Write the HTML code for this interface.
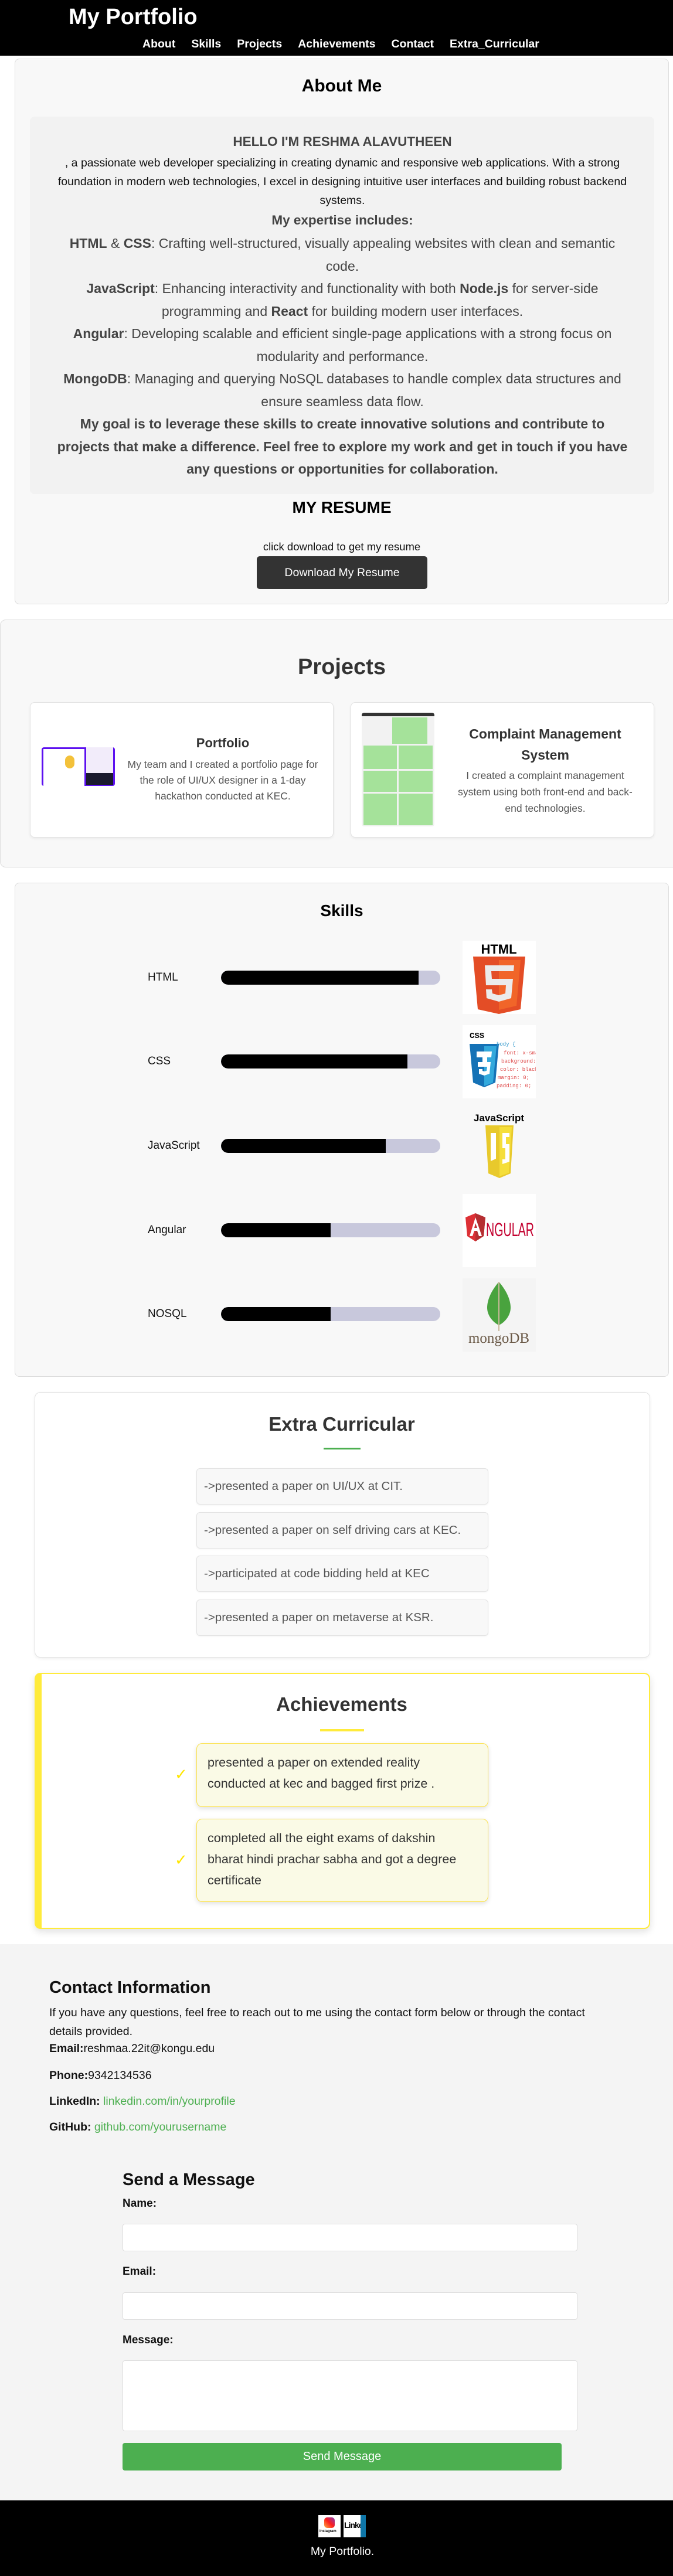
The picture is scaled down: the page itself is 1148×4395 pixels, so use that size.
<!DOCTYPE html>
<html><head><meta charset="utf-8"><style>
*{box-sizing:border-box;margin:0;padding:0}
body{width:1148px;height:4395px;position:relative;background:#fff;font-family:"Liberation Sans",Arial,sans-serif;overflow:hidden}
.a{position:absolute}
.c{text-align:center}
header{position:absolute;left:0;top:0;width:1148px;height:95px;background:#000;color:#fff}
.nav a{color:#fff;text-decoration:none;font-weight:bold;font-size:19.5px;margin-right:27px}
.box{position:absolute;background:#f8f8f8;border:1px solid #ddd;border-radius:8px}
.lbl{font-size:19px;color:#111}
.bar{position:absolute;left:377px;width:374px;height:24px;border-radius:12px;background:#c8c8dc;overflow:hidden}
.bar i{display:block;height:100%;background:#000;border-radius:12px 0 0 12px}
.ex{position:absolute;left:335px;width:498px;height:62px;background:#f8f8f8;border:1px solid #e3e3e3;border-radius:6px;font-size:20.5px;color:#555;padding-left:12px;line-height:60px;box-shadow:0 1px 3px rgba(0,0,0,.05)}
.ach{position:absolute;left:335px;width:498px;background:#fafae6;border:1.5px solid #fbe14a;border-radius:10px;font-size:21.5px;color:#333;padding:14px 60px 14px 18px;line-height:36px;box-shadow:0 3px 8px rgba(0,0,0,.12)}
.chk{position:absolute;left:298px;color:#ffe600;font-size:26px}
.inp{position:absolute;left:209px;width:776px;background:#fff;border:1px solid #ddd;border-radius:4px}
.fl{position:absolute;left:209px;font-weight:bold;font-size:19px;color:#111}
.ct{position:absolute;left:84px;font-size:19.5px;color:#111}
</style></head><body>
<header>
<div class="a" style="left:117px;top:8px;font-size:38px;font-weight:bold">My Portfolio</div>
<div class="a nav" style="left:243px;top:64px;white-space:nowrap"><a>About</a><a>Skills</a><a>Projects</a><a>Achievements</a><a>Contact</a><a>Extra_Curricular</a></div>
</header>

<div class="box" style="left:25px;top:100px;width:1116px;height:931px"></div>
<div class="a c" style="left:0;width:1166px;top:130px;font-size:30px;font-weight:bold">About Me</div>
<div class="a" style="left:51px;top:199px;width:1065px;height:644px;background:#f2f2f2;border-radius:8px"></div>
<div class="a c" style="left:60px;width:1048px;top:229px;font-size:22.5px;font-weight:bold;color:#444">HELLO I'M RESHMA ALAVUTHEEN</div>
<div class="a c" style="left:80px;width:1008px;top:262px;font-size:19.5px;line-height:32px;color:#111">, a passionate web developer specializing in creating dynamic and responsive web applications. With a strong foundation in modern web technologies, I excel in designing intuitive user interfaces and building robust backend systems.</div>
<div class="a c" style="left:60px;width:1048px;top:363px;font-size:22.5px;font-weight:bold;color:#444">My expertise includes:</div>
<div class="a c" style="left:96px;width:976px;top:396px;font-size:23px;line-height:38.5px;color:#444">
<b>HTML</b> &amp; <b>CSS</b>: Crafting well-structured, visually appealing websites with clean and semantic code.<br>
<b>JavaScript</b>: Enhancing interactivity and functionality with both <b>Node.js</b> for server-side programming and <b>React</b> for building modern user interfaces.<br>
<b>Angular</b>: Developing scalable and efficient single-page applications with a strong focus on modularity and performance.<br>
<b>MongoDB</b>: Managing and querying NoSQL databases to handle complex data structures and ensure seamless data flow.<br>
<b>My goal is to leverage these skills to create innovative solutions and contribute to projects that make a difference. Feel free to explore my work and get in touch if you have any questions or opportunities for collaboration.</b></div>
<div class="a c" style="left:0;width:1166px;top:850px;font-size:28px;font-weight:bold">MY RESUME</div>
<div class="a c" style="left:0;width:1166px;top:922px;font-size:18.5px;color:#111">click download to get my resume</div>
<div class="a c" style="left:438px;top:949px;width:291px;height:56px;background:#333;border-radius:5px;color:#fff;font-size:19.5px;line-height:56px">Download My Resume</div>

<div class="box" style="left:0;top:1057px;width:1160px;height:423px;border-radius:10px"></div>
<div class="a c" style="left:0;width:1166px;top:1117px;font-size:38px;font-weight:bold;color:#333">Projects</div>
<div class="a" style="left:51px;top:1198px;width:518px;height:231px;background:#fff;border:1px solid #e2e2e2;border-radius:8px;box-shadow:0 2px 5px rgba(0,0,0,.06)"></div>
<div class="a" style="left:71px;top:1275px;width:125px;height:66px;background:#5c10f0;border-radius:4px;overflow:hidden"><div style="position:absolute;left:3px;top:3px;width:70px;height:63px;background:#fff"></div><div style="position:absolute;left:40px;top:14px;width:16px;height:22px;border-radius:8px;background:#f3c13a"></div><div style="position:absolute;left:76px;top:0;width:46px;height:44px;background:#f2ecfa"></div><div style="position:absolute;left:76px;top:44px;width:46px;height:20px;background:#1a1a2e"></div></div>
<div class="a c" style="left:205px;width:350px;top:1255px;font-size:22px;font-weight:bold;color:#333">Portfolio</div>
<div class="a c" style="left:205px;width:350px;top:1291px;font-size:17.5px;line-height:27px;color:#555">My team and I created a portfolio page for the role of UI/UX designer in a 1-day hackathon conducted at KEC.</div>
<div class="a" style="left:598px;top:1198px;width:518px;height:231px;background:#fff;border:1px solid #e2e2e2;border-radius:8px;box-shadow:0 2px 5px rgba(0,0,0,.06)"></div>
<div class="a" style="left:617px;top:1216px;width:124px;height:194px;background:#f2f2f2;border-radius:4px;overflow:hidden"><div style="height:6px;background:#333"></div>
<div style="position:absolute;left:52px;top:8px;width:60px;height:45px;background:#a5e29a"></div>
<div style="position:absolute;left:3px;top:56px;width:57px;height:40px;background:#a5e29a"></div><div style="position:absolute;left:63px;top:56px;width:58px;height:40px;background:#a5e29a"></div>
<div style="position:absolute;left:3px;top:99px;width:57px;height:36px;background:#a5e29a"></div><div style="position:absolute;left:63px;top:99px;width:58px;height:36px;background:#a5e29a"></div>
<div style="position:absolute;left:3px;top:138px;width:57px;height:54px;background:#a5e29a"></div><div style="position:absolute;left:63px;top:138px;width:58px;height:54px;background:#a5e29a"></div></div>
<div class="a c" style="left:770px;width:320px;top:1234px;font-size:23px;font-weight:bold;color:#333;line-height:36px">Complaint Management System</div>
<div class="a c" style="left:770px;width:320px;top:1309px;font-size:17.5px;line-height:28px;color:#555">I created a complaint management system using both front-end and back-end technologies.</div>

<div class="box" style="left:25px;top:1506px;width:1116px;height:843px"></div>
<div class="a c" style="left:0;width:1166px;top:1538px;font-size:28px;font-weight:bold">Skills</div>
<div class="a lbl" style="left:252px;top:1657px">HTML</div><div class="bar" style="top:1656px"><i style="width:90%"></i></div>
<div class="a lbl" style="left:252px;top:1800px">CSS</div><div class="bar" style="top:1799px"><i style="width:85%"></i></div>
<div class="a lbl" style="left:252px;top:1944px">JavaScript</div><div class="bar" style="top:1943px"><i style="width:75%"></i></div>
<div class="a lbl" style="left:252px;top:2088px">Angular</div><div class="bar" style="top:2087px"><i style="width:50%"></i></div>
<div class="a lbl" style="left:252px;top:2231px">NOSQL</div><div class="bar" style="top:2230px"><i style="width:50%"></i></div>

<svg class="a" style="left:789px;top:1605px" width="125" height="125" viewBox="0 0 125 125"><rect width="125" height="125" fill="#fff"/><text x="62" y="22" text-anchor="middle" font-family="Liberation Sans" font-weight="bold" font-size="22">HTML</text><path d="M18 27h89l-8 90-37 8-36-8z" fill="#e44d26"/><path d="M62 33v85l30-7 7-78z" fill="#f16529"/><path d="M38 42h50l-1 10H49l1 13h36l-3 33-21 6-21-6-1-15h10l1 7 11 3 11-3 1-14H40z" fill="#ebebeb"/></svg>
<svg class="a" style="left:789px;top:1749px" width="125" height="125" viewBox="0 0 125 125"><rect width="125" height="125" fill="#fff"/><text x="12" y="22" font-family="Liberation Mono" font-weight="bold" font-size="14">CSS</text><path d="M12 32h50l-6 66-19 8-19-8z" fill="#1572b6"/><path d="M37 36v68l15-6 6-62z" fill="#33a9dc"/><path d="M24 45h26l-1 10H34v8h14l-2 20-9 3-9-3v-8h6v3l3 1 4-1 1-7H26v-8h16v-8H24z" fill="#fff"/><g font-family="Liberation Mono" font-size="9" fill="#d44"><text x="58" y="35" fill="#39c">body {</text><text x="70" y="50">font: x-smal</text><text x="66" y="64">background: </text><text x="64" y="78">color: black;</text><text x="60" y="92">margin: 0;</text><text x="58" y="106">padding: 0;</text></g></svg>
<svg class="a" style="left:789px;top:1893px" width="125" height="125" viewBox="0 0 125 125"><text x="62" y="20" text-anchor="middle" font-family="Liberation Sans" font-weight="bold" font-size="17">JavaScript</text><path d="M39 27h48l-5 82-19 8-19-8z" fill="#e8c92c"/><path d="M63 30v84l16-6 5-78z" fill="#f5de3a"/><path d="M48 40h9v44l-9 4zM68 40h12v7h-6v12h6v30l-12 4v-8h5V66h-5z" fill="#fff"/></svg>
<svg class="a" style="left:789px;top:2037px" width="125" height="125" viewBox="0 0 125 125"><rect width="125" height="125" fill="#fff"/><path d="M5 40l17-7 17 7-3 32-14 9-14-9z" fill="#dd3035"/><path d="M22 33l17 7-3 32-14 9z" fill="#b52e31"/><path d="M22 40l-10 32h5l3-9h5l3 9h5zM20 58l2-8 3 8z" fill="#fff"/><text x="40" y="72" font-family="Liberation Sans" font-size="32" fill="#c3002f" textLength="82" lengthAdjust="spacingAndGlyphs">NGULAR</text></svg>
<svg class="a" style="left:789px;top:2181px" width="125" height="125" viewBox="0 0 125 125"><rect width="125" height="125" fill="#f4f4f4"/><path d="M62 6c-14 16-20 32-20 44s8 24 20 30c12-6 20-18 20-30S76 22 62 6z" fill="#49a33e"/><path d="M62 6v84" stroke="#c8b89a" stroke-width="2"/><text x="62" y="110" text-anchor="middle" font-family="Liberation Serif" font-size="25" fill="#6b5a48">mongoDB</text></svg>

<div class="a" style="left:59px;top:2375px;width:1050px;height:453px;background:#fff;border:1px solid #e2e2e2;border-radius:10px;box-shadow:0 2px 6px rgba(0,0,0,.06)"></div>
<div class="a c" style="left:0;width:1166px;top:2411px;font-size:33px;font-weight:bold;color:#333">Extra Curricular</div>
<div class="a" style="left:552px;top:2470px;width:63px;height:3px;background:#4caf50"></div>
<div class="ex" style="top:2505px">-&gt;presented a paper on UI/UX at CIT.</div>
<div class="ex" style="top:2580px">-&gt;presented a paper on self driving cars at KEC.</div>
<div class="ex" style="top:2654px">-&gt;participated at code bidding held at KEC</div>
<div class="ex" style="top:2729px">-&gt;presented a paper on metaverse at KSR.</div>

<div class="a" style="left:59px;top:2854px;width:1050px;height:437px;background:#fff;border:2px solid #ffeb3b;border-left:12px solid #ffeb3b;border-radius:10px;box-shadow:0 5px 12px rgba(0,0,0,.12)"></div>
<div class="a c" style="left:0;width:1166px;top:2889px;font-size:33px;font-weight:bold;color:#333">Achievements</div>
<div class="a" style="left:546px;top:2950px;width:75px;height:4px;background:#ffeb3b"></div>
<div class="chk" style="top:3012px">&#10003;</div>
<div class="ach" style="top:2974px;height:109px">presented a paper on extended reality conducted at kec and bagged first prize .</div>
<div class="chk" style="top:3158px">&#10003;</div>
<div class="ach" style="top:3103px;height:142px;padding-right:30px">completed all the eight exams of dakshin bharat hindi prachar sabha and got a degree certificate</div>

<div class="a" style="left:0;top:3317px;width:1148px;height:949px;background:#f4f4f4"></div>
<div class="ct" style="top:3375px;font-size:29px;font-weight:bold">Contact Information</div>
<div class="ct" style="top:3418px;width:960px;line-height:32px">If you have any questions, feel free to reach out to me using the contact form below or through the contact details provided.</div>
<div class="ct" style="top:3484px"><b>Email:</b>reshmaa.22it@kongu.edu</div>
<div class="ct" style="top:3530px"><b>Phone:</b>9342134536</div>
<div class="ct" style="top:3574px"><b>LinkedIn:</b> <span style="color:#4caf50">linkedin.com/in/yourprofile</span></div>
<div class="ct" style="top:3618px"><b>GitHub:</b> <span style="color:#4caf50">github.com/yourusername</span></div>
<div class="fl" style="top:3703px;font-size:29px">Send a Message</div>
<div class="fl" style="top:3749px">Name:</div>
<div class="inp" style="top:3794px;height:47px"></div>
<div class="fl" style="top:3865px">Email:</div>
<div class="inp" style="top:3911px;height:47px"></div>
<div class="fl" style="top:3982px">Message:</div>
<div class="inp" style="top:4027px;height:121px"></div>
<div class="a c" style="left:209px;top:4168px;width:749px;height:47px;background:#4caf50;border-radius:4px;color:#fff;font-size:20px;line-height:47px">Send Message</div>

<div class="a" style="left:0;top:4266px;width:1148px;height:129px;background:#000"></div>
<div class="a" style="left:543px;top:4291px;width:38px;height:38px;background:#fff"><div style="position:absolute;left:10px;top:4px;width:18px;height:18px;border-radius:5px;background:linear-gradient(45deg,#fcb045,#fd1d1d,#833ab4)"></div><div style="position:absolute;left:2px;top:25px;font-size:6px;font-weight:bold">Instagram</div></div>
<div class="a" style="left:586px;top:4291px;width:38px;height:38px;background:#fff;overflow:hidden"><span style="position:absolute;left:1px;top:9px;font-size:14px;font-weight:bold;letter-spacing:-1px">Linked</span><div style="position:absolute;right:0;top:0;width:9px;height:38px;background:#0e76a8"></div></div>
<div class="a c" style="left:0;width:1168px;top:4342px;color:#fff;font-size:19.5px">My Portfolio.</div>
</body></html>
